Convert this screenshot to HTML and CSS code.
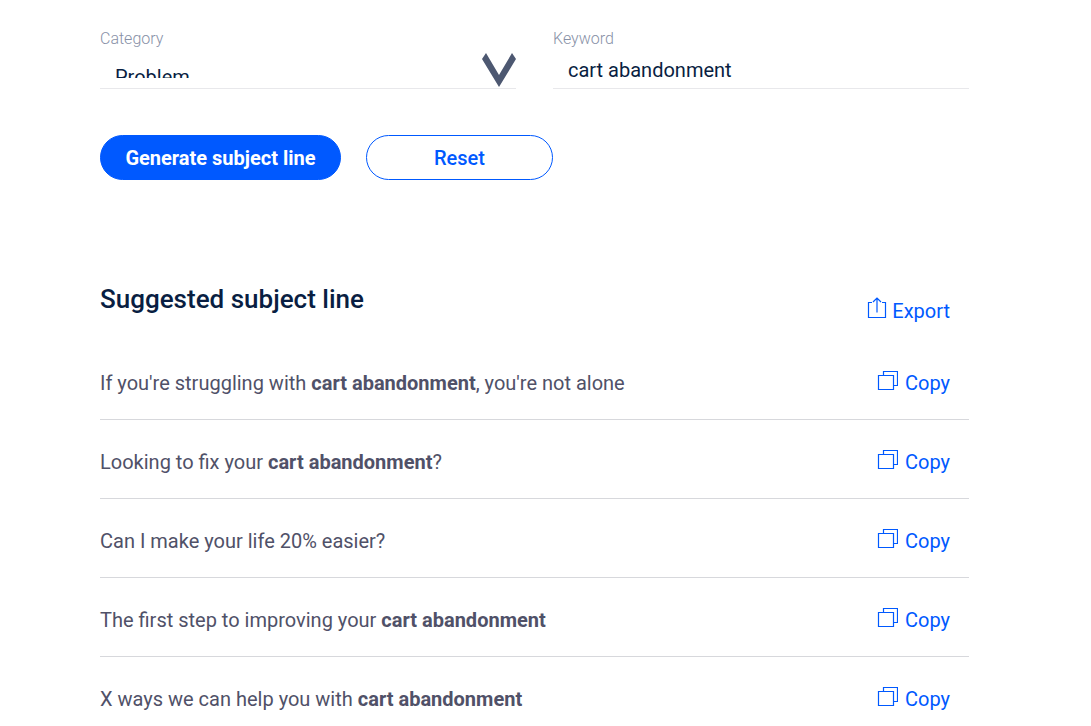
FILE: index.html
```html
<!DOCTYPE html>
<html lang="en">
<head>
  <meta charset="UTF-8" />
  <meta name="viewport" content="width=device-width, initial-scale=1.0"/>
  <title>Subject line generator</title>
  <link rel="stylesheet" href="styles.css">
</head>
<body>
  <!-- Shared icons -->
  <svg class="sprite" aria-hidden="true">
    <symbol id="icon-copy" viewBox="0 0 21 21">
      <path d="M1.5 6.5H16.5V20.5H1.5ZM6.5 6V2.5H20.5V16.5H17"/>
    </symbol>
    <symbol id="icon-export" viewBox="0 0 20 22">
      <path d="M5 5.5H1.5V20.5H18.5V5.5H15M10 15.5V1M6 5L10 1L14 5"/>
    </symbol>
  </svg>

  <main class="generator">
    <form class="generator-form">
      <div class="fields">
        <div class="field">
          <label for="category">Category</label>
          <div class="select-wrap">
            <select id="category">
              <option>Problem</option>
            </select>
            <svg class="arrow" viewBox="0 0 34 34" aria-hidden="true">
              <path d="M4 0L17 22L30 0L34 6L17 34L0 6Z"/>
            </svg>
          </div>
        </div>
        <div class="field">
          <label for="keyword">Keyword</label>
          <input type="text" id="keyword" value="cart abandonment">
        </div>
      </div>
      <div class="buttons">
        <button type="submit" class="btn btn-primary">Generate subject line</button>
        <button type="reset" class="btn btn-outline">Reset</button>
      </div>
    </form>

    <section class="results">
      <div class="results-header">
        <h2>Suggested subject line</h2>
        <button type="button" class="action export"><svg class="icon-export"><use href="#icon-export"/></svg>Export</button>
      </div>
      <ul class="results-list">
        <li>
          <p>If you're struggling with <strong>cart abandonment</strong>, you're not alone</p>
          <button type="button" class="action"><svg class="icon-copy"><use href="#icon-copy"/></svg>Copy</button>
        </li>
        <li>
          <p>Looking to fix your <strong>cart abandonment</strong>?</p>
          <button type="button" class="action"><svg class="icon-copy"><use href="#icon-copy"/></svg>Copy</button>
        </li>
        <li>
          <p>Can I make your life 20% easier?</p>
          <button type="button" class="action"><svg class="icon-copy"><use href="#icon-copy"/></svg>Copy</button>
        </li>
        <li>
          <p>The first step to improving your <strong>cart abandonment</strong></p>
          <button type="button" class="action"><svg class="icon-copy"><use href="#icon-copy"/></svg>Copy</button>
        </li>
        <li>
          <p>X ways we can help you with <strong>cart abandonment</strong></p>
          <button type="button" class="action"><svg class="icon-copy"><use href="#icon-copy"/></svg>Copy</button>
        </li>
      </ul>
    </section>
  </main>
</body>
</html>
```
FILE: styles.css
```css
* {
  box-sizing: border-box;
}

body {
  margin: 0;
  background-color: #fff;
  color: #505168;
  font-family: Roboto, "Liberation Sans", sans-serif;
  font-size: 20px;
  line-height: 26px;
}

.sprite {
  display: none;
}

.generator {
  padding: 28px 122px 0 100px;
}

/* Form */
.fields {
  display: grid;
  grid-template-columns: 1fr 1fr;
  gap: 37px;
}

.field {
  border-bottom: 1px solid #e8e8eb;
}

.field label {
  display: block;
  color: #8891a7;
  font-size: 16px;
  font-weight: 300;
  line-height: 22px;
}

.field input,
.field select {
  display: block;
  width: 100%;
  height: 38px;
  margin: 0;
  border: 0;
  border-radius: 0;
  outline: none;
  background: transparent;
  color: #091e42;
  font: inherit;
}

.field input {
  padding: 4px 15px 2px;
}

.field select {
  padding: 14px 15px 10px;
  appearance: none;
}

.select-wrap {
  position: relative;
}

.arrow {
  position: absolute;
  top: 3px;
  right: 0;
  width: 34px;
  height: 34px;
  fill: #4d5871;
  pointer-events: none;
}

.buttons {
  display: flex;
  gap: 25px;
  margin-top: 46px;
}

.btn {
  height: 45px;
  border: 1px solid #0059ff;
  border-radius: 23px;
  font: inherit;
  cursor: pointer;
}

.btn-primary {
  min-width: 241px;
  background-color: #0059ff;
  color: #fff;
  font-weight: 700;
}

.btn-outline {
  min-width: 187px;
  background-color: #fff;
  color: #0059ff;
  font-weight: 500;
}

/* Results */
.results {
  margin-top: 102px;
}

.results-header {
  display: flex;
  justify-content: space-between;
  padding-right: 19px;
}

.results-header h2 {
  margin: 0;
  color: #091e42;
  font-size: 26px;
  font-weight: 500;
  line-height: 34px;
}

.action {
  display: flex;
  align-items: center;
  padding: 0;
  border: 0;
  background: none;
  color: #0059ff;
  font: inherit;
  cursor: pointer;
}

.action svg {
  fill: none;
  stroke: #0059ff;
  stroke-width: 1.2;
  margin-bottom: 6px;
}

.export {
  margin-top: 15px;
}

.icon-export {
  width: 20px;
  height: 22px;
  margin-right: 5px;
}

.icon-copy {
  width: 21px;
  height: 21px;
  margin-right: 7px;
}

.results-list {
  margin: 16px 0 0;
  padding: 0;
  list-style: none;
}

.results-list li {
  display: flex;
  justify-content: space-between;
  align-items: center;
  padding: 28px 19px 23px 0;
  border-bottom: 1px solid #d7d8dc;
}

.results-list p {
  margin: 0;
}
```
